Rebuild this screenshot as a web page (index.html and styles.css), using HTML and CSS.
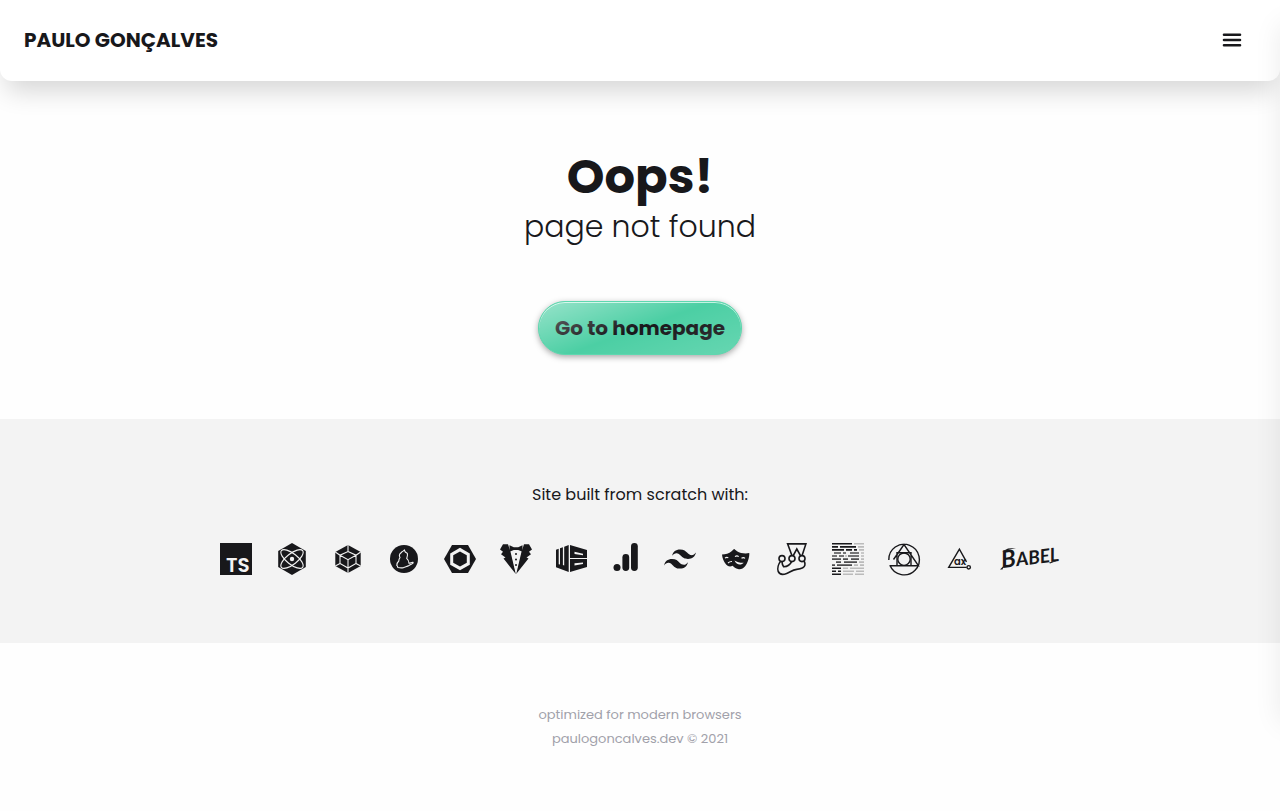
FILE: index.html
```html
<!DOCTYPE html>
<html lang="en">
<head>
<meta charset="utf-8">
<meta name="viewport" content="width=device-width, initial-scale=1">
<title>Paulo Gonçalves</title>
<link rel="stylesheet" href="styles.css">
</head>
<body>
<header class="header">
  <a class="brand" href="#">PAULO GONÇALVES</a>
  <button class="menu-button" type="button" aria-label="Open menu">
    <svg viewBox="0 0 24 24" width="24" height="24" fill="none" stroke="currentColor" stroke-width="2.6" stroke-linecap="round"><path d="M4 6.8h16M4 12h16M4 17.2h16"/></svg>
  </button>
</header>
<aside class="drawer" aria-hidden="true"></aside>
<main class="hero">
  <h1 class="title">Oops!</h1>
  <p class="subtitle">page not found</p>
  <a class="cta" href="#">Go to homepage</a>
</main>
<section class="stack">
  <p class="stack-title">Site built from scratch with:</p>
  <ul class="icons">
    <li><svg class="icon" viewBox="0 0 32 32" role="img" aria-label="TypeScript"><path d="M0 0h32v32H0z"/><text class="ts" x="6" y="29">TS</text></svg></li>
    <li><svg class="icon" viewBox="0 0 32 32" role="img" aria-label="Preact"><path d="M16 0l13.800 8v16L16 32 2.200 24V8z"/><g class="light"><ellipse cx="16" cy="16" rx="13.500" ry="5.400" transform="rotate(38 16 16)"/><ellipse cx="16" cy="16" rx="13.500" ry="5.400" transform="rotate(-38 16 16)"/></g><circle class="paper" cx="16" cy="16" r="2.200"/></svg></li>
    <li><svg class="icon" viewBox="0 0 32 32" role="img" aria-label="webpack"><path d="M16 2l12.700 7v14L16 30 3.300 23V9z"/><path class="light" d="M16 2v6.500M16 25v5M3.300 9L8 12.200M28.700 9L24 12.200M3.300 23L8 20.500M28.700 23L24 20.500M16 8.500l8 3.700v8.300L16 25l-8-4.500v-8.300zM8 12.200l8 4.500 8-4.500M16 16.700V25"/></svg></li>
    <li><svg class="icon" viewBox="0 0 32 32" role="img" aria-label="Yarn"><circle cx="16" cy="16" r="14"/><path class="light" d="M16.300 7l1 2 2 1.300c.7 2-.2 3.700-.6 5 1.300 1.200 2.300 2.700 2.300 4.900 1.700 0 2.700-1.200 4-.9.900 1-2.200 2-4 3.200-2 1.200-3.600 1.200-5.400 2.100-1.900.5-3.900.3-5.600-.1-.8-.7.200-1.200-1.200-2 .1-2.300.7-3.400 2-4.500 0-1.300.3-2.300 1.200-3.300-.7-1.300-1-2.300-.3-3.600L14 8.800c.8-.2 1.600-.9 2.300-1.800z"/></svg></li>
    <li><svg class="icon" viewBox="0 0 32 32" role="img" aria-label="ESLint"><path d="M8 2h16l8 14-8 14H8L0 16z"/><path class="paper" d="M16 4.700l9.800 5.700v11.300L16 27.300l-9.800-5.600V10.400z"/><path d="M16 8.500l6.800 3.800v7.500L16 23.600l-6.800-3.800v-7.500z"/></svg></li>
    <li><svg class="icon" viewBox="0 0 32 32" role="img" aria-label="Knip"><path d="M3 1.200h5l2.500 7.600L15.800 31 3.500 15.500l2-1L1 11.300l2-2.600L0 6.500z"/><path d="M29 1.200h-5l-2.500 7.600L16.200 31l12.300-15.500-2-1 4.500-3.200-2-2.600 3-2.200z"/><path class="paper" d="M9 3l2.200 6 4.800 21 4.800-21L23 3z"/><path d="M9.500 2.200l4.300 2h4.400l4.300-2v6.600l-4.300-1.700h-4.400L9.500 8.800z"/><circle cx="16" cy="11" r="1"/><circle cx="16" cy="16.500" r="1"/><circle cx="16" cy="22" r="1"/></svg></li>
    <li><svg class="icon" viewBox="0 0 32 32" role="img" aria-label="WDB"><path d="M0 6.800l2.700-1v15.400l1.300.3V5.300l2.900-1.100v17.900l1.300.3V3.700L12.700 2v27L0 24.300z"/><path fill-rule="evenodd" d="M14 2l17 5v8H14zM18.500 8.800v2.200l8.500 1.200v-1.500z"/><path fill-rule="evenodd" d="M14 16h17v8l-17 5zM18.500 20.200v2.300l8.500-1.600v-1.500z"/></svg></li>
    <li><svg class="icon icon-slim" viewBox="0 0 28 32" role="img" aria-label="Analytics"><circle cx="5" cy="24.500" r="3.500"/><rect x="10.400" y="11" width="6.800" height="17" rx="3.400"/><rect x="19" y="0" width="6.800" height="28" rx="3.400"/></svg></li>
    <li><svg class="icon" viewBox="2 2 20 20" role="img" aria-label="Tailwind CSS"><path d="M12 6c-2.670 0-4.330 1.330-5 4 1-1.330 2.170-1.830 3.500-1.500.76.190 1.310.740 1.910 1.350.980 1 2.090 2.150 4.590 2.150 2.670 0 4.330-1.330 5-4-1 1.330-2.170 1.830-3.500 1.500-.760-.190-1.300-.740-1.910-1.350C15.610 7.150 14.500 6 12 6m-5 6c-2.670 0-4.330 1.330-5 4 1-1.330 2.170-1.830 3.500-1.500.760.190 1.300.740 1.910 1.350C8.390 16.850 9.500 18 12 18c2.670 0 4.330-1.330 5-4-1 1.330-2.170 1.830-3.500 1.500-.760-.190-1.300-.740-1.910-1.350C10.610 13.150 9.500 12 7 12"/></svg></li>
    <li><svg class="icon" viewBox="0 0 32 32" role="img" aria-label="Playwright"><path d="M2 11.500c3.500 0 7-1 9.600-3.200L14 6c1 .2 1.800 1.500 3 2.200 3.300 2.100 8 2.600 12.300 1.900.2 4.500-1.600 10-4.200 13.200-1.900 2.300-4.400 3.500-7.100 2.800-2.300-.5-4.100-1.700-5.400-3.300-2.400 1.200-4.600.8-6.500-1.300C3.700 18.800 2.300 15 2 11.500z"/><g class="light"><path d="M5 15.200c1-.9 2.200-1 3.300-.4M15 13.700c1.200-1 2.600-1 3.700-.1M21.500 15.200c1.300-.9 2.500-.8 3.500.1M8 20c1.300-1.200 2.600-1.600 4-1.500"/></g><path class="paper" d="M14.500 17.500c2.800 1.700 6 2.500 9.200 2.300-2.700 3.200-7.500 2-9.200-2.300z"/></svg></li>
    <li><svg class="icon" viewBox="0 0 32 32" role="img" aria-label="Jest"><g class="dark"><path d="M16 12.700L11.600.9h18.300L26 12.700M17.200 12.700L20.800 6l3.700 6.700"/><circle cx="6" cy="15.600" r="3"/><circle cx="16" cy="15.600" r="3"/><circle cx="26" cy="15.600" r="3"/><path d="M4.600 18.300C2.400 21 1.200 25.500 2.200 28.400c1.200 3 4.800 3.400 8.500 2 3.600-1.300 5.500-3.400 10-4 4-.4 7.700-1.300 8.200-4.200.3-1.500-.1-2.900-.8-4.200M6 18.600c.1 2 .4 4 1.700 5.200C11 23.600 14.300 21.500 15.500 18.600"/></g></svg></li>
    <li><svg class="icon" viewBox="0 0 32 32" role="img" aria-label="Prettier"><g class="bars"><path d="M0 .8h20M0 3.900h6M8 3.900h16M0 6.900h12M14 6.900h6M22 6.900h3"/><path class="mid" d="M2 10h7M11 10h3M18 10h9M0 13h5M7 13h5M16 13h11M0 16.100h9M11 16.100h5M19 16.100h8M4 19.100h5M12 19.100h13M0 22.100h3M5 22.100h15"/><path d="M0 25.200h9M0 28.200h4M6 28.200h3M0 31.200h9"/><path class="pale" d="M22 .8h10M26 3.900h6M27 6.900h5M29 10h3M29 13h3M13 13h2M29 16.100h3M27 19.100h5M22 22.100h4M28 22.100h4M11 25.200h5M18 25.200h14M11 28.200h11M24 28.200h8M11 31.200h10M23 31.200h9"/></g></svg></li>
    <li><svg class="icon" viewBox="0 0 32 32" role="img" aria-label="PostCSS"><g class="dark thin"><path d="M.8 17A15.300 15.300 0 1 1 2 22.500M1.500 22.800h29L16 1.500l-5.500 8-5 7M9 22.500V9.800h14v12.700"/><circle cx="16" cy="16.200" r="6.200"/></g></svg></li>
    <li><svg class="icon" viewBox="0 0 32 32" role="img" aria-label="axe"><g class="dark thin"><path d="M22.500 18.800L15.400 6.200 4.700 24.400h18"/><circle cx="24.700" cy="24.300" r="1.700"/></g><text class="ax" x="10" y="22">ax</text></svg></li>
    <li><svg class="icon icon-wide" viewBox="0 0 60 32" role="img" aria-label="Babel"><text class="babel" x="2" y="25" transform="rotate(-7 2 25)"><tspan class="babel-initial">B</tspan>ABEL</text><path d="M0 26.500l4-4-1.500 4zM2 8.500l6-3 8-.5-7 1.800zM49 19.500l10-2.500-9 3.500z"/></svg></li>
  </ul>
</section>
<footer class="footer">
  <p>optimized for modern browsers</p>
  <p>paulogoncalves.dev © 2021</p>
</footer>
</body>
</html>
```
FILE: styles.css
```css
* { box-sizing: border-box; }
html { overflow-x: hidden; }
body {
  margin: 0;
  min-height: 100vh;
  display: flex;
  flex-direction: column;
  overflow-x: hidden;
  background: #fefefe;
  color: #18181b;
  font-family: Poppins, Inter, sans-serif;
  font-size: 16px;
  line-height: 24px;
}
h1, p, ul { margin: 0; padding: 0; }
a { color: inherit; text-decoration: none; }
.header {
  display: flex;
  align-items: center;
  justify-content: space-between;
  padding: 16px 24px 17px;
  border-radius: 0 0 12px 12px;
  background: #fff;
  box-shadow: 0 16px 26px -6px rgba(0, 0, 0, 0.16);
}
.brand { font-size: 20px; font-weight: 700; line-height: 28px; }
.menu-button {
  display: flex;
  padding: 12px;
  border: 0;
  background: none;
  color: inherit;
  cursor: pointer;
}
/* Closed menu, parked beyond the right edge of the window */
.drawer {
  position: fixed;
  top: 24px;
  bottom: 88px;
  left: 100%;
  width: 256px;
  box-shadow: 0 0 26px rgba(0, 0, 0, 0.08);
}
.hero {
  display: flex;
  flex-direction: column;
  align-items: center;
  padding: 72px 24px 64px;
  text-align: center;
}
.title { font-size: 48px; font-weight: 700; line-height: 48px; }
.subtitle { margin-top: 8px; font-size: 30px; font-weight: 300; line-height: 36px; }
.cta {
  position: relative;
  margin-top: 56px;
  padding: 12px 16px;
  border: 1px solid #5dd8af;
  border-radius: 27px;
  background: #4ccfa4;
  box-shadow: 0 2px 6px rgba(0, 0, 0, 0.35), inset 0 1px 0 #c4f3e2;
  font-size: 20px;
  font-weight: 700;
  line-height: 28px;
}
.cta::after {
  content: "";
  position: absolute;
  inset: 0;
  border-radius: 27px;
  background: linear-gradient(160deg, rgba(255, 255, 255, 0.42), rgba(255, 255, 255, 0) 50%, rgba(255, 255, 255, 0.15));
}
.stack {
  padding: 64px 24px 68px;
  background: #f3f3f3;
  text-align: center;
}
.icons {
  display: flex;
  flex-wrap: wrap;
  justify-content: center;
  gap: 24px;
  margin-top: 36px;
  list-style: none;
}
.icon { display: block; width: 32px; height: 32px; overflow: visible; fill: #18181b; }
.icon-slim { width: 28px; }
.icon-wide { width: 60px; }
.icon .paper { fill: #f3f3f3; }
.icon .light { fill: none; stroke: #f3f3f3; stroke-width: 1.1; }
.icon .dark { fill: none; stroke: #18181b; stroke-width: 1.6; }
.icon .thin { stroke-width: 1.4; }
.bars { fill: none; stroke: #18181b; stroke-width: 1.6; }
.bars .mid { stroke: #4d4d4f; }
.bars .pale { stroke: #bbb; }
.ts { fill: #f3f3f3; font: 600 20px/20px Poppins, Lato, sans-serif; }
.ax { font: 600 10px Poppins, Lato, sans-serif; }
.babel { font: italic 700 19px Lato, sans-serif; }
.babel-initial { font-size: 24px; }
.footer {
  padding: 60px 24px;
  color: #a1a1aa;
  font-size: 13px;
  text-align: center;
}
```
